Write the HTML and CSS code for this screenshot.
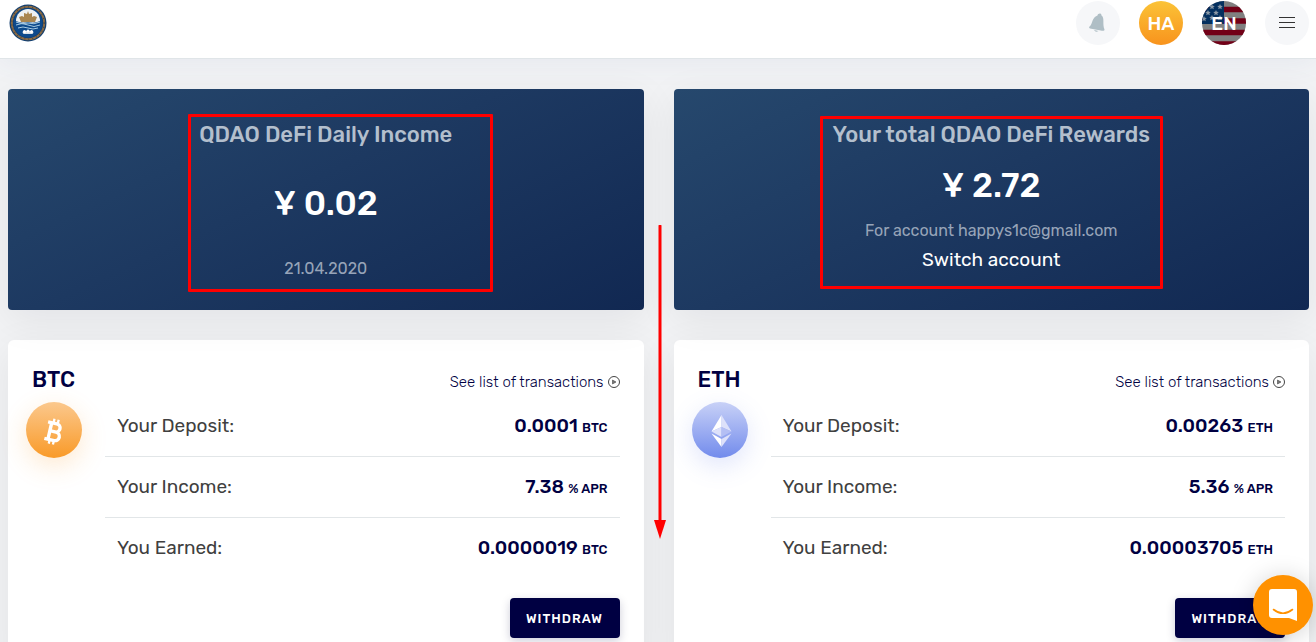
FILE: index.html
```html
<!DOCTYPE html>
<html lang="en">
<head>
    <meta charset="UTF-8">
    <meta name="viewport" content="width=device-width, initial-scale=1.0">
    <title>QDAO DeFi</title>
    <link rel="stylesheet" href="styles.css">
</head>
<body>
    <header class="topbar">
        <a href="#" class="logo" aria-label="Home">
            <svg width="38" height="38" viewBox="0 0 38 38">
                <circle cx="19" cy="19" r="18.5" fill="#123f70"/>
                <circle cx="19" cy="19" r="16.2" fill="none" stroke="#8a6b45" stroke-width="2"/>
                <circle cx="19" cy="19" r="16.2" fill="none" stroke="#4d4a45" stroke-width="1.4" stroke-dasharray="1 3"/>
                <circle cx="19" cy="19" r="14.4" fill="#0d4a8c"/>
                <path d="M7 17a12 12 0 0 1 24 0l-2 3H9z" fill="#eef1f2"/>
                <path d="M12 18l-2-5 3-1 2 1 0-4 3 1 1-3 1 3 3-1 0 4 2-1 3 1-2 5z" fill="#a98650"/>
                <path d="M7 17q6 3 12 1 6 2 12-1v6q-6 4-12 2-6 2-12-2z" fill="#0d4a8c"/>
                <path d="M7 18q6 3 12 1 6 2 12-1M7 21q6-3 12 0t12 0M9 24q5-2 10 0t10 0" fill="none" stroke="#a7cbe3" stroke-width="1"/>
                <path d="M14.500 27h9l1 1.500-1 1.500h-9l-1-1.500z" fill="#d8e0e8"/>
                <circle cx="15.500" cy="27.500" r="1.600" fill="#fff"/>
                <circle cx="19" cy="27" r="1.600" fill="#fff"/>
                <circle cx="22.500" cy="27.500" r="1.600" fill="#fff"/>
            </svg>
        </a>
        <nav class="actions">
            <button type="button" class="circle" aria-label="Notifications">
                <svg width="20" height="22" viewBox="0 0 20 22">
                    <path d="M1.500 14.500C5 12 3.500 5.500 9.500 3.500 10 1 13.500.8 13.500 3.500 17 6 14 12 16.500 17.500 16.500 19 15 19 14 18.700L2 16.500Q.3 16 1.500 14.500zM6 18l4.500 1q-3 2-4.500-1z" fill="#afbec5"/>
                </svg>
            </button>
            <button type="button" class="circle user">HA</button>
            <button type="button" class="circle lang">
                <svg class="flag" width="44" height="44" viewBox="0 0 44 44">
                    <rect width="44" height="44" fill="#808080"/>
                    <path d="M0 8.500h44M0 20h44M0 31.500h44M0 43h44" stroke="#720017" stroke-width="5.700"/>
                    <rect width="22" height="23" fill="#04305f"/>
                    <g fill="#8b98a5">
                        <path id="star" d="M10 3l.8 1.800 2 .2-1.500 1.300.5 2L10 7.300l-1.800 1 .5-2L7.200 5l2-.2z"/>
                        <use href="#star" x="8"/>
                        <use href="#star" x="-4" y="6"/>
                        <use href="#star" x="4" y="6"/>
                        <use href="#star" y="11"/>
                        <use href="#star" x="8" y="11"/>
                        <use href="#star" x="-8" y="12"/>
                    </g>
                </svg>
                <span class="lang-code">EN</span>
            </button>
            <button type="button" class="circle" aria-label="Menu">
                <svg width="16" height="12" viewBox="0 0 16 12">
                    <path d="M0 .5h16M0 5.500h16M0 10.500h16" stroke="#333" stroke-width="1"/>
                </svg>
            </button>
        </nav>
    </header>

    <main class="content">
        <div class="grid">
            <section class="hero spread">
                <h2 class="hero-title">QDAO DeFi Daily Income</h2>
                <p class="hero-amount">¥ 0.02</p>
                <p class="hero-note">21.04.2020</p>
                <div class="mark mark-income"></div>
            </section>
            <section class="hero">
                <h2 class="hero-title">Your total QDAO DeFi Rewards</h2>
                <p class="hero-amount">¥ 2.72</p>
                <p class="hero-note">For account happys1c@gmail.com</p>
                <a href="#" class="hero-link">Switch account</a>
                <div class="mark mark-rewards"></div>
            </section>

            <section class="card">
                <div class="card-head">
                    <h3 class="coin-name">BTC</h3>
                    <a href="#" class="see-list">See list of transactions
                        <svg width="12" height="12" viewBox="0 0 12 12">
                            <circle cx="6" cy="6" r="5.500" fill="none" stroke="#444"/>
                            <path d="M4.500 4v4l3.500-2z" fill="#777" stroke="#444" stroke-width=".6"/>
                        </svg>
                    </a>
                </div>
                <div class="card-body">
                    <div class="coin btc">
                        <svg width="56" height="56" viewBox="0 0 56 56">
                            <g transform="rotate(13 28 30)" fill="none" stroke="#fff">
                                <path d="M20 21.500h9a4 4 0 0 1 0 8.200h-5.500M29 29.700h1a4.300 4.300 0 0 1 0 8.600H20M23.700 21.500v16.800" stroke-width="3.400"/>
                                <path d="M25.500 17v4M29.800 17v4M25.500 38v4.500M29.800 38v4.500" stroke-width="2.300"/>
                            </g>
                        </svg>
                    </div>
                    <table class="stats">
                        <tr><th scope="row">Your Deposit:</th><td>0.0001 <small>BTC</small></td></tr>
                        <tr><th scope="row">Your Income:</th><td>7.38 <small>% APR</small></td></tr>
                        <tr><th scope="row">You Earned:</th><td>0.0000019 <small>BTC</small></td></tr>
                    </table>
                </div>
                <div class="card-foot">
                    <button type="button" class="withdraw">WITHDRAW</button>
                </div>
            </section>

            <section class="card">
                <div class="card-head">
                    <h3 class="coin-name">ETH</h3>
                    <a href="#" class="see-list">See list of transactions
                        <svg width="12" height="12" viewBox="0 0 12 12">
                            <circle cx="6" cy="6" r="5.500" fill="none" stroke="#444"/>
                            <path d="M4.500 4v4l3.500-2z" fill="#777" stroke="#444" stroke-width=".6"/>
                        </svg>
                    </a>
                </div>
                <div class="card-body">
                    <div class="coin eth">
                        <svg width="56" height="56" viewBox="0 0 56 56">
                            <path d="M29.500 13L19.500 29.500 29.500 25z" fill="#fff"/>
                            <path d="M29.500 13l10 16.500-10-4.500z" fill="#dde1fa"/>
                            <path d="M29.500 25l-10 4.500 10 5.500z" fill="#dde1fa"/>
                            <path d="M29.500 25l10 4.500-10 5.500z" fill="#b4bff4"/>
                            <path d="M19.500 31.500l10 5.500v8z" fill="#fff"/>
                            <path d="M39.500 31.500l-10 5.500v8z" fill="#dde1fa"/>
                        </svg>
                    </div>
                    <table class="stats">
                        <tr><th scope="row">Your Deposit:</th><td>0.00263 <small>ETH</small></td></tr>
                        <tr><th scope="row">Your Income:</th><td>5.36 <small>% APR</small></td></tr>
                        <tr><th scope="row">You Earned:</th><td>0.00003705 <small>ETH</small></td></tr>
                    </table>
                </div>
                <div class="card-foot">
                    <button type="button" class="withdraw">WITHDRAW</button>
                </div>
            </section>
        </div>

        <svg class="arrow" width="12" height="314" viewBox="0 0 12 314">
            <path d="M6 1v298" stroke="#f00" stroke-width="3" stroke-linecap="round"/>
            <path d="M0 295h12L6 314z" fill="#f00"/>
        </svg>
    </main>

    <button type="button" class="chat" aria-label="Open chat">
        <svg width="28" height="32" viewBox="0 0 28 32">
            <path d="M3 0h22a3 3 0 0 1 3 3v29l-8-3H3a3 3 0 0 1-3-3V3a3 3 0 0 1 3-3z" fill="#fff"/>
            <path d="M4.500 20.500q9.500 7.500 19 0" fill="none" stroke="#ff9100" stroke-width="1.600" stroke-linecap="round"/>
        </svg>
    </button>
</body>
</html>
```

FILE: styles.css
```css
* {
    box-sizing: border-box;
}

html {
    scrollbar-width: none;
}

body {
    margin: 0;
    background: #f2f3f5;
    color: #404040;
    font-family: Rubik, Roboto, sans-serif;
    font-size: 19px;
}

h2, h3, p {
    margin: 0;
}

a {
    color: inherit;
    text-decoration: none;
}

button {
    border: none;
    padding: 0;
    font-family: inherit;
    cursor: pointer;
}

/* top bar */
.topbar {
    position: relative;
    display: flex;
    justify-content: space-between;
    align-items: center;
    padding: 1px 7px 13px 9px;
    background: #fff;
    border-bottom: 1px solid #e0e5e8;
    box-shadow: 0 2px 30px rgba(60, 90, 150, 0.08);
}

.logo, .logo svg {
    display: block;
}

.actions {
    display: flex;
    gap: 19px;
}

.circle {
    position: relative;
    display: flex;
    justify-content: center;
    align-items: center;
    width: 44px;
    height: 44px;
    overflow: hidden;
    border-radius: 50%;
    background: #f6f7f9;
    color: #fff;
    font-size: 19px;
    font-weight: 500;
}

.user {
    background: linear-gradient(#fbc337, #f8931d);
}

.flag {
    position: absolute;
    top: 0;
    left: 0;
}

.lang-code {
    position: relative;
}

/* content */
.content {
    position: relative;
    padding: 30px 7px 30px 8px;
}

.grid {
    display: grid;
    grid-template-columns: 1fr 1fr;
    gap: 30px;
}

.hero {
    position: relative;
    display: flex;
    flex-direction: column;
    align-items: center;
    min-height: 221px;
    padding: 30px 16px 29px;
    border-radius: 4px;
    background: linear-gradient(155deg, #26486d, #1d3961 45%, #112852);
    box-shadow: 0 10px 40px rgba(20, 20, 30, 0.07);
    color: #fff;
    text-align: center;
}

.spread {
    justify-content: space-between;
}

.hero-title {
    color: #b3bfcd;
    font-size: 22px;
    font-weight: 500;
    line-height: 32px;
}

.hero-amount {
    font-size: 34px;
    font-weight: 500;
    line-height: 48px;
}

.hero-note {
    color: #97a4b8;
    font-size: 16px;
    line-height: 24px;
}

.hero:not(.spread) .hero-amount {
    margin: 11px 0 9px;
}

.hero-link {
    margin-top: 5px;
    line-height: 24px;
}

/* red pointers over the page */
.mark {
    position: absolute;
    border: 3px solid #f00;
    border-radius: 1px;
}

.mark-income {
    top: 25px;
    left: calc(50% - 138px);
    width: 305px;
    height: 178px;
}

.mark-rewards {
    top: 27px;
    left: calc(50% - 171px);
    width: 343px;
    height: 173px;
}

.arrow {
    position: absolute;
    top: 166px;
    left: calc(50% - 4px);
}

/* coin cards */
.card {
    padding: 24px 24px 24px 18px;
    border-radius: 6px;
    background: #fff;
    box-shadow: 0 10px 40px rgba(20, 20, 30, 0.07);
}

.card-head {
    display: flex;
    justify-content: space-between;
    align-items: baseline;
    height: 31px;
    padding-left: 6px;
    color: #000042;
}

.coin-name {
    font-size: 22px;
    font-weight: 500;
    line-height: 32px;
}

.see-list {
    display: flex;
    align-items: center;
    gap: 4px;
    font-size: 15px;
    font-weight: 300;
}

.card-body {
    display: flex;
    align-items: flex-start;
    gap: 23px;
}

.coin {
    width: 56px;
    height: 56px;
    margin-top: 7px;
    border-radius: 50%;
}

.btc {
    background: linear-gradient(#fbc88d, #f99a28);
    box-shadow: 0 8px 26px rgba(249, 154, 40, 0.22);
}

.eth {
    background: linear-gradient(#c8d1f7, #728bec);
    box-shadow: 0 8px 26px rgba(98, 126, 234, 0.2);
}

.stats {
    flex: 1;
    border-collapse: collapse;
}

.stats th, .stats td {
    height: 61px;
    padding: 0 12px;
    border-bottom: 1px solid #e2e6e8;
}

.stats tr:last-child th, .stats tr:last-child td {
    border-bottom: none;
}

.stats th {
    font-weight: 400;
    text-align: left;
}

.stats td {
    color: #000042;
    font-weight: 500;
    text-align: right;
}

.stats small {
    font-size: 13px;
}

.card-foot {
    display: flex;
    justify-content: flex-end;
    padding-top: 20px;
}

.withdraw {
    width: 110px;
    height: 40px;
    border-radius: 4px;
    background: #000042;
    box-shadow: 0 3px 10px rgba(0, 0, 66, 0.2);
    color: #fff;
    font-size: 13px;
    font-weight: 500;
    letter-spacing: 1px;
}

/* chat launcher */
.chat {
    position: fixed;
    right: 3px;
    bottom: 7px;
    display: flex;
    justify-content: center;
    align-items: center;
    width: 60px;
    height: 60px;
    border-radius: 50%;
    background: #ff9100;
    box-shadow: 0 2px 24px rgba(0, 0, 0, 0.18);
}
```
